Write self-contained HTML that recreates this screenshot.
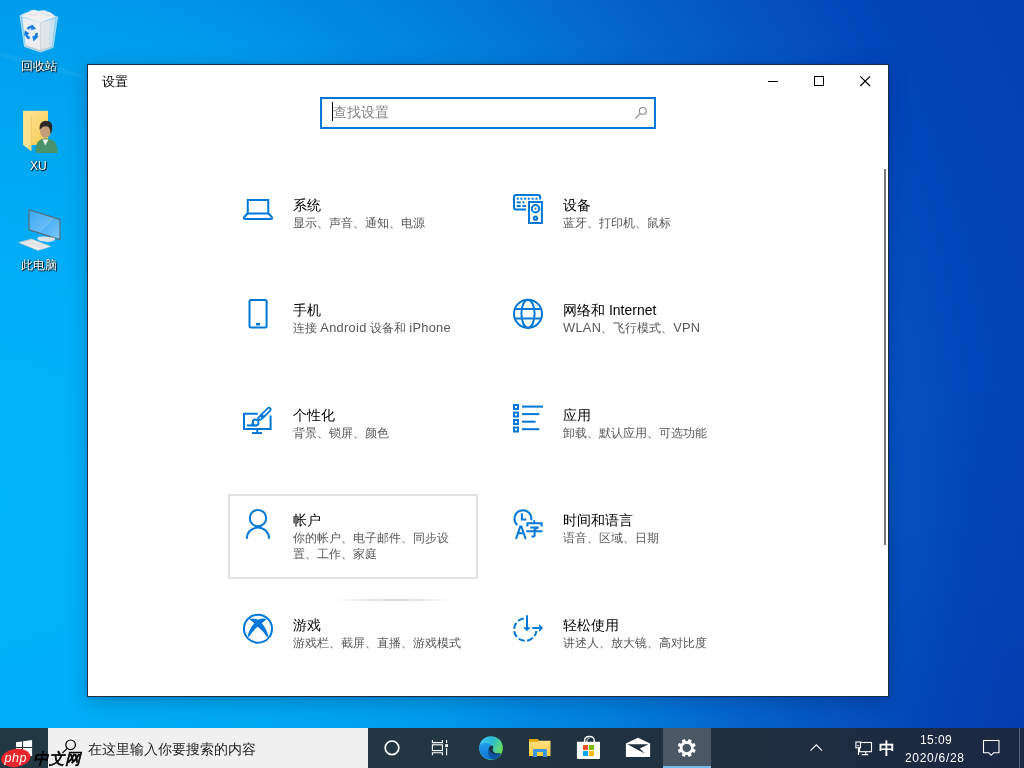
<!DOCTYPE html>
<html><head><meta charset="utf-8">
<style>
html,body{margin:0;padding:0;width:1024px;height:768px;overflow:hidden;font-family:"Liberation Sans",sans-serif;}
svg{position:absolute;overflow:visible;}
#desk{position:absolute;left:0;top:0;width:1024px;height:728px;
 background:radial-gradient(circle at 1024px 728px,rgba(0,0,70,.085) 0px,rgba(0,0,70,0) 350px),radial-gradient(circle at -20px 500px,#02b6fb 0px,#01b0f8 200px,#00a8f2 350px,#009cec 500px,#008ae4 590px,#0080dc 660px,#0566cf 785px,#044ec0 945px,#0346bb 1000px,#0340b3 1130px);}
#win{position:absolute;left:87px;top:64px;width:800px;height:631px;background:#fff;border:1px solid #1b2e44;
 box-shadow:0 5px 18px rgba(0,20,60,.26), 0 0 4px rgba(0,20,60,.15);}
.t{position:absolute;white-space:nowrap;line-height:1;will-change:transform;}
#title{left:14px;top:10.6px;font-size:12.6px;color:#000;}
#search{position:absolute;left:232px;top:32px;width:332px;height:28px;border:2px solid #0078d7;}
#search .ph{left:11px;top:6.8px;font-size:13.5px;color:#858585;}
#search .cur{position:absolute;left:10px;top:3px;width:1px;height:19px;background:#000;}
.h{font-size:14px;color:#000;}
.s{font-size:12px;color:#585858;}
.L{font-size:12.8px;letter-spacing:.3px;}
#acct{position:absolute;left:140px;top:429px;width:246px;height:81px;border:2px solid #e2e2e2;}
#sbar{position:absolute;left:796px;top:104px;width:2px;height:376px;background:#777;}
#taskbar{position:absolute;left:0;top:728px;width:1024px;height:40px;
 background:linear-gradient(90deg,#223843 0%,#223743 40%,#1f2f3f 72%,#1b2842 98%);}
#tbsearch{position:absolute;left:48px;top:0;width:320px;height:40px;background:#f0f0f0;}
#gearbg{position:absolute;left:663px;top:0;width:48px;height:40px;background:#4b5864;border-bottom:2px solid #76b9ed;box-sizing:border-box;}
#tbtext{left:88px;top:14px;font-size:14px;color:#1e1e1e;}
#clk1{left:920px;top:5.5px;font-size:12px;color:#fff;letter-spacing:0.4px;}
#clk2{left:905px;top:23.5px;font-size:12px;color:#fff;letter-spacing:0.7px;}
#ime{left:878.5px;top:11.5px;font-size:16.2px;color:#fff;font-weight:bold;}
.dl{font-size:12px;color:#fff;text-shadow:1px 1px 1px #000,0 0 2px rgba(0,0,0,.75);}
</style></head><body>
<div id="desk"></div>
<div style="position:absolute;left:-10px;top:50px;width:110px;height:3px;background:linear-gradient(90deg,rgba(255,255,255,.06),rgba(255,255,255,.1),rgba(255,255,255,.05));transform:rotate(15deg);transform-origin:0 0;filter:blur(1px)"></div>
<div class="t dl" style="left:21px;top:60px">回收站</div>
<div class="t dl" style="left:30px;top:160px">XU</div>
<div class="t dl" style="left:21px;top:259px">此电脑</div>
<svg id="dicons" width="1024" height="768" viewBox="0 0 1024 768" style="left:0;top:0">
 <defs>
  <linearGradient id="binG" x1="0" y1="0" x2="1" y2="0">
   <stop offset="0" stop-color="#e4ecf2"/><stop offset="0.5" stop-color="#f4f6f8"/><stop offset="1" stop-color="#c9dbe8"/>
  </linearGradient>
  <linearGradient id="monG" x1="0" y1="0" x2="1" y2="1">
   <stop offset="0" stop-color="#3aa8f2"/><stop offset="0.55" stop-color="#66bdf7"/><stop offset="0.56" stop-color="#4fb2f4"/><stop offset="1" stop-color="#7fc9f9"/>
  </linearGradient>
  <linearGradient id="fldG" x1="0" y1="0" x2="1" y2="1">
   <stop offset="0" stop-color="#fde59a"/><stop offset="1" stop-color="#f5c94f"/>
  </linearGradient>
 </defs>
 <!-- recycle bin -->
 <path d="M20 15.5L33.5 10.5L57.5 17L53 47.5L40.5 52L24.5 46.5Z" fill="#d6ecfa" opacity="0.6"/>
 <path d="M22.5 17.5L40.5 22.5V50.5L25.5 45.5Z" fill="#eceef0"/>
 <path d="M40.5 22.5L55 18.5L51.5 46.5L40.5 50.5Z" fill="#e2e5e8"/>
 <path d="M50 20L55 18.5L52 46L48.5 45Z" fill="#c6dff0" opacity="0.85"/>
 <path d="M21.5 16.5Q24 12 28 12.5Q31 9 35 10Q38 11 41 10.5Q45 9.5 47 11.5Q52 12 55.5 17Q48 19.5 40.5 22.5Q31 19.5 21.5 16.5Z" fill="#f0f0f0"/>
 <path d="M28 14Q33 16 37 14.5M42 13Q45 16 50 15.5M40.5 22.5V50.5" stroke="#cfd2d5" stroke-width="0.7" fill="none"/>
 <path d="M20 15.5L33.5 10.5L57.5 17L53 47.5L40.5 52L24.5 46.5Z" fill="none" stroke="#cde6f6" stroke-width="0.8"/>
 <path d="M25.5 45.5L40.5 50.5L51.5 46.5" fill="none" stroke="#d9c9bd" stroke-width="0.8"/>
 <g fill="none" stroke="#1a7fe0" stroke-width="2.6">
  <path d="M27.8 29.2Q29.5 26.2 32.6 26.8"/>
  <path d="M36.6 33Q36.8 36.5 33.8 38.2"/>
  <path d="M29.6 38.2Q26.2 36.8 26.3 33.2"/>
 </g>
 <g fill="#1a7fe0">
  <path d="M31.8 24.2L36.2 28.8L31 30.2Z"/>
  <path d="M38.8 36.2L33.6 41.4L32.2 36.2Z"/>
  <path d="M24 35.8L24.8 30.2L29.6 33.6Z"/>
 </g>
 <!-- folder + user -->
 <path d="M23.2 110.8H48V145H23.2Z" fill="url(#fldG)"/>
 <path d="M23.2 110.8L31.2 116.8V151L23.2 145Z" fill="#fbe08f"/>
 <path d="M31.2 116.8V151" stroke="#e8c05a" stroke-width="0.7"/>
 <path d="M35.5 153Q35 143 40.5 139.5L44 138.5H48L51 139.5Q57.5 142 58 153Z" fill="#4a936a"/>
 <path d="M42.5 139.5L45.2 145.5L48.5 139.5Z" fill="#eef2ee"/>
 <ellipse cx="45.6" cy="131" rx="5.6" ry="6.8" fill="#c59e78"/>
 <path d="M39.6 130Q38.8 121 45.8 120.8Q53 120.8 52.2 128.5Q51.8 133 50.2 134.5Q50.8 128 47.5 126.5Q43 125 39.6 130Z" fill="#2c2826"/>
 <!-- this pc -->
 <path d="M29 209.8L59.9 219.5V239.6L29 229.8Z" fill="url(#monG)" stroke="#5d6871" stroke-width="1.1"/>
 <path d="M37 238.5Q37 236 45 236.5L55 238Q56 241.5 48 242Q38 241.5 37 238.5Z" fill="#dfe3e6"/>
 <path d="M18.5 242.5L31.5 239L51 246.5L38 250.5Z" fill="#eef0f2" stroke="#b7bcc2" stroke-width="0.6"/>
 <path d="M22 242L41 248M25 241L44 247.5M28 240.3L47 246.8" stroke="#c3c8cd" stroke-width="0.5"/>
</svg>
<div id="win">
  <div class="t" id="title">设置</div>
  <div id="search"><div class="cur"></div><div class="t ph">查找设置</div></div>

  <div class="t h" style="left:205px;top:133px">系统</div>
  <div class="t s" style="left:205px;top:152px">显示、声音、通知、电源</div>
  <div class="t h" style="left:475px;top:133px">设备</div>
  <div class="t s" style="left:475px;top:152px">蓝牙、打印机、鼠标</div>

  <div class="t h" style="left:205px;top:238px">手机</div>
  <div class="t s" style="left:205px;top:257px">连接 <span class="L">Android</span> 设备和 <span class="L">iPhone</span></div>
  <div class="t h" style="left:475px;top:238px">网络和 Internet</div>
  <div class="t s" style="left:475px;top:257px"><span class="L">WLAN</span>、飞行模式、<span class="L">VPN</span></div>

  <div class="t h" style="left:205px;top:343px">个性化</div>
  <div class="t s" style="left:205px;top:362px">背景、锁屏、颜色</div>
  <div class="t h" style="left:475px;top:343px">应用</div>
  <div class="t s" style="left:475px;top:362px">卸载、默认应用、可选功能</div>

  <div id="acct"></div>
  <div class="t h" style="left:205px;top:448px">帐户</div>
  <div class="t s" style="left:205px;top:467px">你的帐户、电子邮件、同步设</div>
  <div class="t s" style="left:205px;top:483px">置、工作、家庭</div>
  <div class="t h" style="left:475px;top:448px">时间和语言</div>
  <div class="t s" style="left:475px;top:467px">语音、区域、日期</div>

  <div class="t h" style="left:205px;top:553px">游戏</div>
  <div class="t s" style="left:205px;top:572px">游戏栏、截屏、直播、游戏模式</div>
  <div class="t h" style="left:475px;top:553px">轻松使用</div>
  <div class="t s" style="left:475px;top:572px">讲述人、放大镜、高对比度</div>

  <div id="sbar"></div>
  <div style="position:absolute;left:244px;top:533.5px;width:123px;height:2px;background:linear-gradient(90deg,rgba(0,0,0,0),rgba(0,0,0,.13) 45%,rgba(0,0,0,.13) 60%,rgba(0,0,0,0));filter:blur(0.4px)"></div>
</div>

<svg id="ov" width="1024" height="768" viewBox="0 0 1024 768" style="left:0;top:0">
 <g stroke="#000" stroke-width="1" fill="none">
  <path d="M768 81.5H778"/>
  <rect x="814.5" y="76.5" width="9" height="9"/>
  <path d="M860.3 76.3L870 86M870 76.3L860.3 86" stroke-width="1.15"/>
 </g>
 <g stroke="#858585" stroke-width="1.05" fill="none">
  <circle cx="642.8" cy="110.9" r="3.4"/>
  <path d="M639.9 113.8L635.3 118.4"/>
 </g>
 <g stroke="#0078d7" stroke-width="2" fill="none">
  <!-- laptop -->
  <rect x="247.75" y="200" width="20.5" height="13.5"/>
  <path d="M247.5 213.5L244.3 217Q243.3 219 245.3 219H270.7Q272.7 219 271.7 217L268.5 213.5" stroke-linejoin="round"/>
  <!-- devices -->
  <path d="M526 209.5H516Q514 209.5 514 207.5V197Q514 195 516 195H538.2Q540.2 195 540.2 197V199.6"/>
  <rect x="529" y="202" width="12.9" height="21"/>
  <circle cx="535.5" cy="208.8" r="3.7"/>
  <circle cx="535.5" cy="218.2" r="1.6"/>
  <!-- phone -->
  <rect x="249.5" y="300" width="17.1" height="27.6" rx="1.5"/>
  <!-- globe -->
  <circle cx="528" cy="313.8" r="14"/>
  <ellipse cx="528" cy="313.8" rx="6.6" ry="14"/>
  <path d="M514.8 309.1H541.2M514.8 318.5H541.2"/>
  <!-- personalize -->
  <path d="M257.8 413.8H244V429H270.6V415.4"/>
  <path d="M257.3 429V432.5M252 433H262"/>
  <path d="M247 425.4H253"/>
  <!-- account -->
  <circle cx="258" cy="518.1" r="8.2"/>
  <path d="M246.8 538.7A11.15 11.15 0 0 1 269.1 538.7"/>
  <!-- time -->
  <path d="M517.4 525A8.4 8.4 0 1 1 531.2 520.2"/>
  <path d="M521.9 513.3V519.5H526.3"/>
  <path d="M516 539L520.2 526.6H521.4L525.7 539M517.8 533.2H523.8"/>
  <path d="M534.2 520.2V522.8M527.4 526.6V523.2H541.6V526.4M530.2 527.4H538.4L534.6 529.4V535.8Q534.6 536.6 533.6 536.6H531.4M526.2 531.2H542.6"/>
  <!-- xbox -->
  <circle cx="258" cy="628.7" r="14"/>
  <!-- ease -->
  <path d="M523.8 618.5A11.2 11.2 0 1 0 536.4 630.9" stroke-dasharray="6.4 2.45"/>
  <path d="M527 615.3V628M532.2 628H539.5"/>
 </g>
 <g fill="#0078d7">
  <rect x="256" y="323" width="4" height="2.5"/>
  <!-- keyboard keys -->
  <rect x="516.7" y="197.7" width="2" height="2"/><rect x="520.4" y="197.7" width="2" height="2"/><rect x="524.1" y="197.7" width="2" height="2"/>
  <rect x="527.8" y="197.7" width="2" height="2"/><rect x="531.6" y="197.7" width="2" height="2"/><rect x="535.4" y="197.7" width="2" height="2"/>
  <rect x="516.7" y="201.4" width="4" height="2"/><rect x="522.4" y="201.4" width="2" height="2"/>
  <rect x="516.7" y="205" width="4" height="2"/><rect x="522.4" y="205" width="3.6" height="2"/>
  <circle cx="535.5" cy="208.8" r="1"/>
  <!-- apps -->
  <path fill-rule="evenodd" d="M513 404h6v6h-6zM515 406v2h2v-2zM513 411.5h6v6h-6zM515 413.5v2h2v-2zM513 419h6v6h-6zM515 421v2h2v-2zM513 426.5h6v6h-6zM515 428.5v2h2v-2z"/>
  <rect x="522" y="405.6" width="21" height="2"/>
  <rect x="522" y="413.1" width="17.3" height="2"/>
  <rect x="522" y="420.7" width="13.6" height="2"/>
  <rect x="522" y="428.2" width="17.3" height="2"/>
  <!-- xbox X -->
  <path d="M249.2 618.9Q254 617.8 257.8 619.8Q262 617.8 266.8 618.9L261.7 623.3Q266.5 628.5 268.3 635.8L267.2 637.3Q263 630.5 257.8 626.8Q252.6 630.5 248.8 637.3L247.7 635.8Q249.5 628.5 254.3 623.3Z"/>
  <!-- ease arrows -->
  <path d="M523 627.3H530.8L526.9 631.3Z"/>
  <path d="M539.2 623.9L543 628L539.2 632.1Z"/>
 </g>
 <!-- brush -->
 <g stroke-linecap="round">
  <path d="M269 409.4L261.8 416.6" stroke="#0078d7" stroke-width="5.2"/>
  <path d="M269 409.4L263.6 414.8" stroke="#fff" stroke-width="1.5"/>
 </g>
 <path d="M263 415.2L258.6 419.6" stroke="#0078d7" stroke-width="4.6"/>
 <path d="M255.5 425.6H252.6V423" stroke="#0078d7" stroke-width="2" fill="none"/>
 <circle cx="255.6" cy="422.5" r="2.9" fill="#fff" stroke="#0078d7" stroke-width="2"/>
 <circle cx="260.3" cy="417.9" r="0.85" fill="#fff"/>
</svg>

<div id="taskbar">
  <div id="tbsearch"></div>
  <div id="gearbg"></div>
  <div class="t" id="tbtext">在这里输入你要搜索的内容</div>
  <div class="t" id="clk1">15:09</div>
  <div class="t" id="clk2">2020/6/28</div>
  <div class="t" id="ime">中</div>
</div>
<svg id="tbov" width="1024" height="768" viewBox="0 0 1024 768" style="left:0;top:0">
 <defs>
  <linearGradient id="eg1" x1="0" y1="0.1" x2="1" y2="0.55">
   <stop offset="0" stop-color="#3cc4f6"/><stop offset="0.5" stop-color="#2ebcd4"/><stop offset="1" stop-color="#6ae25a"/>
  </linearGradient>
  <linearGradient id="eg2" x1="0" y1="0" x2="0" y2="1">
   <stop offset="0" stop-color="#239ceb"/><stop offset="1" stop-color="#1173d6"/>
  </linearGradient>
  <linearGradient id="fg1" x1="0" y1="0" x2="0" y2="1">
   <stop offset="0" stop-color="#ffe28a"/><stop offset="1" stop-color="#ffcb3a"/>
  </linearGradient>
 </defs>
 <!-- windows logo -->
 <g fill="#fff">
  <path d="M16 742.2L22 741.4V747H16Z"/>
  <path d="M23 741.2L32.1 739.9V747H23Z"/>
  <path d="M16 748H22V755.6L16 754.8Z"/>
  <path d="M23 748H32.1V756.2L23 755Z"/>
 </g>
 <!-- taskbar search magnifier -->
 <g stroke="#000" stroke-width="1.2" fill="none">
  <circle cx="70.6" cy="744.8" r="4.8"/>
  <path d="M67.2 748.3L62.5 753"/>
 </g>
 <!-- cortana -->
 <circle cx="392" cy="747.8" r="6.8" stroke="#fff" stroke-width="1.7" fill="none"/>
 <!-- task view -->
 <g fill="none" stroke="#fff" stroke-width="1.1">
  <path d="M432.4 740V742.6H442.4V740"/>
  <rect x="432.4" y="744.8" width="10" height="5.8"/>
  <path d="M432.4 755.2V752.7H442.4V755.2"/>
  <path d="M446.6 740V743M446.6 748V755.2"/>
 </g>
 <rect x="445.2" y="744.2" width="2.8" height="2.8" fill="#fff"/>
 <!-- edge -->
 <g transform="translate(476,733)">
  <circle cx="15" cy="15" r="11.85" fill="url(#eg1)"/>
  <path d="M3.1 13.2C5.5 9.5 11.5 8.6 16.2 12.4C12.5 12.5 12 17 14.5 19C17 21 21.5 21.3 24.8 21.2A12 12 0 0 1 3.1 13.2Z" fill="url(#eg2)"/>
  <path d="M13.4 14C11 17.5 11.5 24.5 17.5 26.7A12 12 0 0 0 24.8 21.2C21.5 21.3 17 21 14.5 19C12.8 17.6 12.7 15.5 13.4 14Z" fill="#0d56a6"/>
  <path d="M15 19.4C17.5 20.8 21 21 24.5 20.6" stroke="#17375a" stroke-width="1.1" fill="none"/>
  <path d="M16.2 12.4C12.5 12.5 12 17 14.5 19C15.8 20 17.5 20.3 19.5 20.3C17 19 16.3 17.5 17 15.5C17.6 14 17.3 12.9 16.2 12.4Z" fill="#1a3148"/>
 </g>
 <!-- explorer -->
 <path d="M529 739H537.5L539 740.8H550.5V756.1H529Z" fill="url(#fg1)"/>
 <path d="M529 739H537.5L539 741.8H529Z" fill="#e5a50a"/>
 <path d="M533 749.6Q533 749 533.6 749H546.3Q546.9 749 546.9 749.6V757H542.9V752H537V757H533Z" fill="#3b95e0"/>
 <!-- store -->
 <path d="M576.9 741.8H600V757.8Q600 759 598.8 759H578.1Q576.9 759 576.9 757.8Z" fill="#fff"/>
 <path d="M584.6 742V740.5Q584.6 736.5 589.4 736.5Q594.2 736.5 594.2 740.5V742" stroke="#fff" stroke-width="1.4" fill="none"/>
 <path d="M586.8 742V741Q586.8 738.6 589.4 738.3" stroke="#fff" stroke-width="0.9" fill="none"/>
 <rect x="583" y="745" width="5" height="5" fill="#f35325"/>
 <rect x="589" y="745" width="5" height="5" fill="#81bc06"/>
 <rect x="583" y="751" width="5" height="5" fill="#05a6f0"/>
 <rect x="589" y="751" width="5" height="5" fill="#ffba08"/>
 <!-- mail -->
 <path d="M625.9 743.4L638 737.7L650.1 743.4V757H625.9Z" fill="#fff"/>
 <path d="M627.3 744.3H648.6L639.8 748.6L644.7 753.5Z" fill="#20303f"/>
 <!-- gear -->
 <g transform="translate(686.75,747.9)">
  <path fill="#fff" fill-rule="evenodd" d="M1.03 -6.92L1.91 -9.00L5.01 -7.72L4.16 -5.63A7.0 7.0 0 0 1 5.63 -4.16L7.72 -5.01L9.00 -1.91L6.92 -1.03A7.0 7.0 0 0 1 6.92 1.03L9.00 1.91L7.72 5.01L5.63 4.16A7.0 7.0 0 0 1 4.16 5.63L5.01 7.72L1.91 9.00L1.03 6.92A7.0 7.0 0 0 1 -1.03 6.92L-1.91 9.00L-5.01 7.72L-4.16 5.63A7.0 7.0 0 0 1 -5.63 4.16L-7.72 5.01L-9.00 1.91L-6.92 1.03A7.0 7.0 0 0 1 -6.92 -1.03L-9.00 -1.91L-7.72 -5.01L-5.63 -4.16A7.0 7.0 0 0 1 -4.16 -5.63L-5.01 -7.72L-1.91 -9.00L-1.03 -6.92A7.0 7.0 0 0 1 1.03 -6.92Z M0 -4.25A4.25 4.25 0 1 0 0.01 -4.25Z"/>
 </g>
 <!-- tray chevron -->
 <path d="M810.5 750.6L816.3 744.8L822.1 750.6" stroke="#fff" stroke-width="1.1" fill="none"/>
 <!-- network -->
 <g stroke="#fff" stroke-width="1.1" fill="none">
  <rect x="859.5" y="742.5" width="12" height="9.2"/>
  <path d="M865.8 751.7V754.5M861.7 754.6H868.2M858.5 748V755"/>
 </g>
 <rect x="855.9" y="742" width="4.6" height="5.8" fill="#1c2a42" stroke="#fff" stroke-width="1.1"/>
 <path d="M857.3 745L858.2 746.2L859.1 745" stroke="#fff" stroke-width="0.8" fill="none"/>
 <!-- notification -->
 <path d="M983.5 740.5H999V752.8H993.6L991.2 755.3L988.8 752.8H983.5Z" stroke="#fff" stroke-width="1.1" fill="none"/>
 <rect x="1019" y="728" width="1" height="40" fill="#5b6472"/>
 <!-- watermark -->
 <g transform="translate(15.8,758) rotate(-8)">
  <ellipse cx="0" cy="0" rx="14.8" ry="9" fill="#e8262b"/>
 </g>
 <text x="4.5" y="761.5" font-family="Liberation Sans" font-style="italic" font-size="12.5" fill="#fff" textLength="22">php</text>
 <text x="33" y="764" font-family="Liberation Sans" font-style="italic" font-size="15.5" fill="#000" stroke="#000" stroke-width="0.7" textLength="48" lengthAdjust="spacingAndGlyphs">中文网</text>
</svg>
</body></html>
